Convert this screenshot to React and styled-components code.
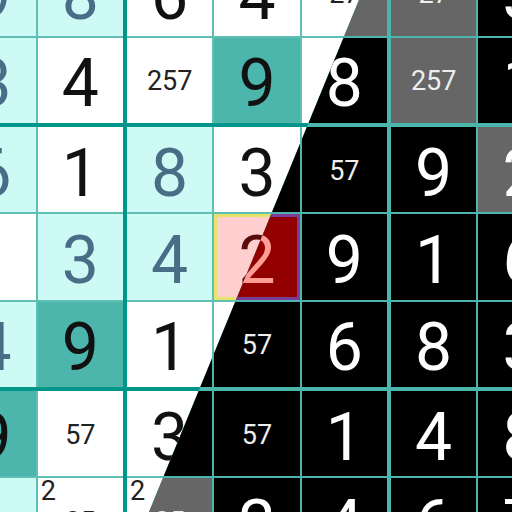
import React from 'react';
import styled, { createGlobalStyle } from 'styled-components';

const GlobalStyle = createGlobalStyle`
  html, body {
    margin: 0;
    padding: 0;
    background: #ffffff;
  }
  body {
    font-family: Roboto, "Liberation Sans", sans-serif;
  }
`;

const LIGHT = {
  thick: '#00968a',
  thin: '#5fbfb4',
  plain: '#ffffff',
  hl: '#cdfaf4',
  same: '#4db6ac',
  given: '#111111',
  user: '#4a6d87',
  notes: '#222222',
  selBg: '#ffcfcf',
  selRing: '#e4e46a',
  selText: '#5a0b0b',
};

const DARK = {
  thick: '#4db6ac',
  thin: '#4db6ac',
  plain: '#000000',
  hl: '#666666',
  same: '#4db6ac',
  given: '#ffffff',
  user: '#ffffff',
  notes: '#eeeeee',
  selBg: '#930000',
  selRing: '#7b3d99',
  selText: '#ff9c94',
};

// 9x9 boards, only rows/cols 1..7 show in the window
// token: '.' empty, gN given, uN user entry, nXYZ notes, cA|XY corner + notes; ':h' highlight, ':s' same digit, ':x' selected
const LIGHT_BOARD = [
  '. . . . . . . . .',
  '. u9:h u8:h g6 g4 n27 . . .',
  '. u3:h g4 n257 g9:s . . . .',
  '. u6:h g1 u8:h g3 . . . .',
  '. . u3:h u4:h u2:x . . . .',
  '. u4:h g9:s g1 . . . . .',
  '. g9:s n57 g3 . . . . .',
  '. .:h c2|35 c2|35 . . . . .',
  '. . . . . . . . .',
];

const DARK_BOARD = [
  '. . . . . . . . .',
  '. . . . . .:h n27:h g3 .',
  '. . . . . g8 n257:h g1 .',
  '. . . . . n57 g9 g2:h .',
  '. . . . u2:x g9 g1 g6 .',
  '. . . . n57 g6 g8 g3 .',
  '. . . . n57 g1 g4 g8 .',
  '. . . c2|35:h g2 g4 g6 g7 .',
  '. . . . . . . . .',
];

const Viewport = styled.div`
  position: relative;
  width: 512px;
  height: 512px;
  overflow: hidden;
`;

const DarkLayer = styled.div`
  position: absolute;
  inset: 0;
  clip-path: polygon(359px 0, 512px 0, 512px 512px, 149px 512px);
`;

const Board = styled.div`
  display: grid;
  grid-template-columns: repeat(3, 260px);
  grid-template-rows: repeat(3, 260px);
  gap: 4px;
  width: 788px;
  margin: -137px 0 0 -137px;
  background: ${(p) => p.$p.thick};
`;

const Block = styled.div`
  display: grid;
  grid-template-columns: repeat(3, 1fr);
  grid-template-rows: repeat(3, 1fr);
  gap: 2px;
  background: ${(p) => p.$p.thin};
`;

const bgFor = (p) => {
  if (p.$bg === 'x') return p.$p.selBg;
  if (p.$bg === 'h') return p.$p.hl;
  if (p.$bg === 's') return p.$p.same;
  return p.$p.plain;
};

const Cell = styled.div`
  position: relative;
  display: flex;
  align-items: center;
  justify-content: center;
  min-width: 0;
  background: ${bgFor};
  box-shadow: ${(p) => (p.$bg === 'x' ? `inset 0 0 0 3px ${p.$p.selRing}` : 'none')};
`;

const Digit = styled.span`
  font-size: 66px;
  line-height: 1;
  padding-top: 8px;
  color: ${(p) => (p.$sel ? p.$p.selText : p.$user ? p.$p.user : p.$p.given)};
`;

const Notes = styled.span`
  font-size: 27px;
  line-height: 1;
  padding-top: 3px;
  color: ${(p) => p.$p.notes};
`;

const Corner = styled.span`
  position: absolute;
  top: 0;
  left: 3px;
  font-size: 27px;
  line-height: 1;
  color: ${(p) => p.$p.notes};
`;

const parse = (tok) => {
  const [body, bg] = tok.split(':');
  return { body, bg: bg || '' };
};

const CellContent = ({ body, bg, pal }) => {
  if (body === '.') return null;
  const kind = body[0];
  const rest = body.slice(1);
  if (kind === 'n') return <Notes $p={pal}>{rest}</Notes>;
  if (kind === 'c') {
    const [corner, notes] = rest.split('|');
    return (
      <>
        <Corner $p={pal}>{corner}</Corner>
        <Notes $p={pal}>{notes}</Notes>
      </>
    );
  }
  return (
    <Digit $p={pal} $user={kind === 'u'} $sel={bg === 'x'}>
      {rest}
    </Digit>
  );
};

const SudokuBoard = ({ rows, pal }) => {
  const grid = rows.map((r) => r.split(' ').map(parse));
  const blocks = [];
  for (let br = 0; br < 3; br++) {
    for (let bc = 0; bc < 3; bc++) {
      const cells = [];
      for (let r = br * 3; r < br * 3 + 3; r++) {
        for (let c = bc * 3; c < bc * 3 + 3; c++) {
          const { body, bg } = grid[r][c];
          cells.push(
            <Cell key={`${r}-${c}`} $p={pal} $bg={bg}>
              <CellContent body={body} bg={bg} pal={pal} />
            </Cell>
          );
        }
      }
      blocks.push(
        <Block key={`${br}-${bc}`} $p={pal}>
          {cells}
        </Block>
      );
    }
  }
  return <Board $p={pal}>{blocks}</Board>;
};

const App = () => (
  <>
    <GlobalStyle />
    <Viewport>
      <SudokuBoard rows={LIGHT_BOARD} pal={LIGHT} />
      <DarkLayer>
        <SudokuBoard rows={DARK_BOARD} pal={DARK} />
      </DarkLayer>
    </Viewport>
  </>
);

export default App;
